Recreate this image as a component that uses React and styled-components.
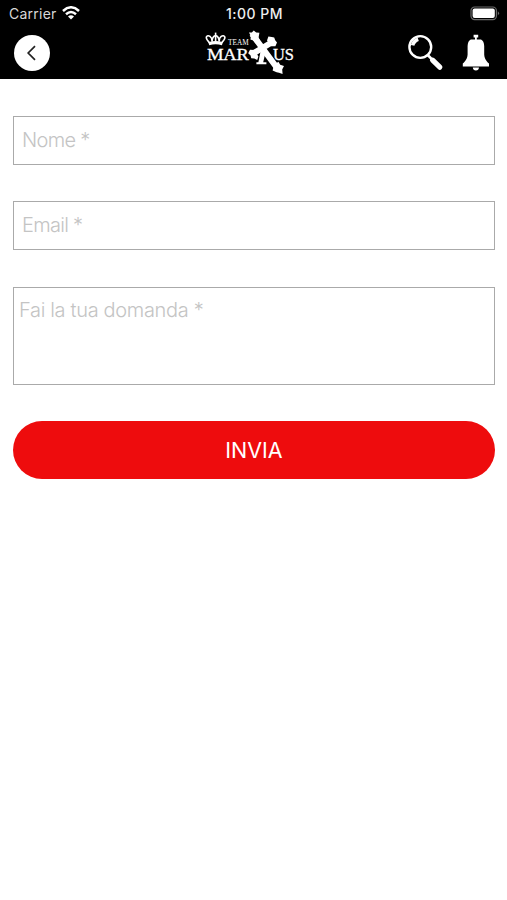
import {useState} from 'react'
import styled, {createGlobalStyle} from 'styled-components'

const GlobalStyle = createGlobalStyle`
  * {
    box-sizing: border-box;
  }
  body {
    margin: 0;
    background: #fff;
    font-family: Inter, "Liberation Sans", sans-serif;
  }
`;

const Screen = styled.div`
  min-height: 900px;
  background: #fff;
`;

const Header = styled.header`
  height: 79px;
  background: #000;
  color: #fff;
`;

const StatusBar = styled.div`
  height: 28px;
  padding: 0 7px 2px 9px;
  display: grid;
  grid-template-columns: 1fr auto 1fr;
  align-items: center;
`;

const Carrier = styled.div`
  display: flex;
  align-items: center;
  gap: 5px;
  font-size: 14px;
  letter-spacing: 0.25px;
  color: #d8d8d8;
`;

const Clock = styled.div`
  font-size: 14px;
  font-weight: 500;
  letter-spacing: 0.5px;
  color: #eee;
`;

const Battery = styled.svg`
  justify-self: end;
`;

const NavBar = styled.nav`
  height: 51px;
  padding: 0 17px 0 14px;
  display: grid;
  grid-template-columns: 191px auto 1fr;
  align-items: start;
`;

const BackButton = styled.button`
  width: 36px;
  height: 36px;
  margin-top: 7px;
  padding: 0;
  border: 0;
  border-radius: 50%;
  background: #fff;
  display: flex;
  align-items: center;
  justify-content: center;
`;

const Actions = styled.div`
  display: flex;
  justify-content: flex-end;
  gap: 18px;
  padding-top: 6px;
`;

const IconButton = styled.button`
  padding: 0;
  border: 0;
  background: none;
  display: flex;
`;

const Form = styled.form`
  padding: 37px 12px 0 13px;
  display: flex;
  flex-direction: column;
  gap: 36px;
`;

const Field = styled.input`
  width: 100%;
  height: 49px;
  padding: 0 8px 2px;
  border: 1px solid #aaa;
  border-radius: 0;
  outline: 0;
  background: #fff;
  font-family: inherit;
  font-size: 20px;
  font-weight: 300;
  letter-spacing: ${(props) => props.$spacing || -0.7}px;
  color: #333;

  &::placeholder {
    color: #c4c4c4;
    opacity: 1;
  }
`;

const Message = styled(Field).attrs({as: 'textarea'})`
  height: 98px;
  margin-top: 1px;
  padding: 10px 5px;
  line-height: 25px;
  resize: none;
  display: block;
`;

const Submit = styled.button`
  height: 58px;
  border: 0;
  border-radius: 29px;
  background: #ee0c0d;
  color: #fff;
  font-family: inherit;
  font-size: 21.5px;
  font-weight: 400;
`;

const WifiIcon = () => (
  <svg width="18" height="14" viewBox="0 0 18 14" fill="none" stroke="#fff" strokeWidth="2.5">
    <path d="M1 5Q9-2.4 17 5" />
    <path d="M4 8.2Q9 3.8 14 8.2" />
    <path d="M9 13.6 6 10.5Q9 8 12 10.5Z" fill="#fff" stroke="none" />
  </svg>
)

const BatteryIcon = () => (
  <Battery width="30" height="15" viewBox="0 0 30 15">
    <rect x="1" y="1" width="25.4" height="12.6" rx="3.6" fill="none" stroke="#6b6b6b" strokeWidth="1.2" />
    <rect x="2.6" y="2.6" width="22.2" height="9.4" rx="2" fill="#fff" />
    <path d="M27.8 5.2Q30.4 7.3 27.8 9.4Z" fill="#6b6b6b" />
  </Battery>
)

const SearchIcon = () => (
  <svg width="36" height="37" viewBox="0 0 36 37" fill="none" stroke="#fff">
    <circle cx="12.3" cy="13" r="10.9" strokeWidth="2.4" />
    <path d="M4.6 11.4Q5.8 6.8 10.2 5.2" strokeWidth="3.6" />
    <path d="M19.7 21 24 25.4" strokeWidth="2.6" />
    <path d="M24.6 26.2 31.8 33.2" strokeWidth="5.2" strokeLinecap="round" />
  </svg>
)

const BellIcon = () => (
  <svg width="28" height="37" viewBox="0 0 28 37" fill="#fff">
    <path d="M11.6.8H16.2V3.6H14.8V5.6H19Q22 7 22.2 12V20.5C22.6 25.2 24.4 27 27 29.6V32.4H.8V29.6C3.4 27 5.2 25.2 5.6 20.5V12Q5.8 7 8.8 5.6H13V3.6H11.6Z" />
    <path d="M10.8 33.4H17Q16.7 36.4 13.9 36.4Q11.1 36.4 10.8 33.4Z" />
  </svg>
)

const Logo = () => (
  <svg width="92" height="50" viewBox="0 0 92 50" fill="#fff" fontFamily="'Liberation Serif', serif">
    {/* crown */}
    <g fill="none" stroke="#fff" strokeWidth="1.6">
      <path d="M4.4 14.6Q.8 11 1.4 9Q2.6 6.8 5 8.4Q7.2 10 7 13.6Q7.2 8.4 10.6 7.4Q14 8.4 14.2 13.6Q14 10 16.2 8.4Q18.6 6.8 19.8 9Q20.4 11 16.8 14.6" />
      <path d="M10.6 4.6V14" />
      <path d="M3.8 15.8Q10.6 13.6 17.4 15.8" strokeWidth="3.2" />
    </g>
    <text x="23" y="17.2" fontSize="7.5" textLength="20.6" lengthAdjust="spacingAndGlyphs">TEAM</text>
    <g stroke="#fff" strokeWidth="0.3">
      <text x="2" y="31.6" fontSize="17.5" textLength="16.6" lengthAdjust="spacingAndGlyphs">M</text>
      <text x="18.2" y="31.6" fontSize="16.5" textLength="25.6" lengthAdjust="spacingAndGlyphs">AR</text>
      <text x="68" y="31.6" fontSize="16.5" textLength="21" lengthAdjust="spacingAndGlyphs">US</text>
    </g>
    {/* cross with flared ends */}
    <path d="M47 6 73.6 42M47.2 26 68.6 13.2" fill="none" stroke="#fff" strokeWidth="6" />
    <path d="M44 4.6 46.8 4.6 48.8 2.6 51.2 4.6 54.4 4.8 53.6 9.4 55.4 13.6 50.6 15.4 48.4 12.4 45.4 11.4 46 8.4Z" />
    <path d="M67.6 42.4 69 37 73.4 33.8 75.2 36.8 79 38 77.2 41.4 77.6 46 74 44.8 71.6 44.2Z" />
    <path d="M62 12.6 63.4 8.6 66.8 9 69.2 9.6 70.2 12.2 72 14.6 70.4 18.2 66 18.2Z" />
    <path d="M53.4 28.4 52.2 32 49.2 30.4 46.2 30.2 45.6 27.6 43.2 25.2 45 21.8 49.6 22Z" />
    {/* thin stroke behind it */}
    <path d="M55.4 24 53.4 34.2H51.4V36.2H61.4V34.2H58.2L60.6 24Z" />
  </svg>
)

const App = () => {
  const [form, setForm] = useState({nome: '', email: '', domanda: ''})

  const update = (e) => setForm({...form, [e.target.name]: e.target.value})

  return (
    <Screen>
      <GlobalStyle />
      <Header>
        <StatusBar>
          <Carrier>
            Carrier
            <WifiIcon />
          </Carrier>
          <Clock>1:00 PM</Clock>
          <BatteryIcon />
        </StatusBar>
        <NavBar>
          <BackButton type="button" aria-label="Indietro">
            <svg width="12" height="18" viewBox="0 0 12 18" fill="none" stroke="#222" strokeWidth="1.7">
              <path d="M9 2.2 2.2 9 9 15.8" />
            </svg>
          </BackButton>
          <Logo />
          <Actions>
            <IconButton type="button" aria-label="Cerca"><SearchIcon /></IconButton>
            <IconButton type="button" aria-label="Notifiche"><BellIcon /></IconButton>
          </Actions>
        </NavBar>
      </Header>
      <Form onSubmit={(e) => e.preventDefault()}>
        <Field name="nome" placeholder="Nome *" $spacing={-0.7} value={form.nome} onChange={update} />
        <Field name="email" placeholder="Email *" value={form.email} onChange={update} />
        <Message name="domanda" placeholder="Fai la tua domanda *" $spacing={-0.33} value={form.domanda} onChange={update} />
        <Submit type="submit">INVIA</Submit>
      </Form>
    </Screen>
  );
}

export default App
